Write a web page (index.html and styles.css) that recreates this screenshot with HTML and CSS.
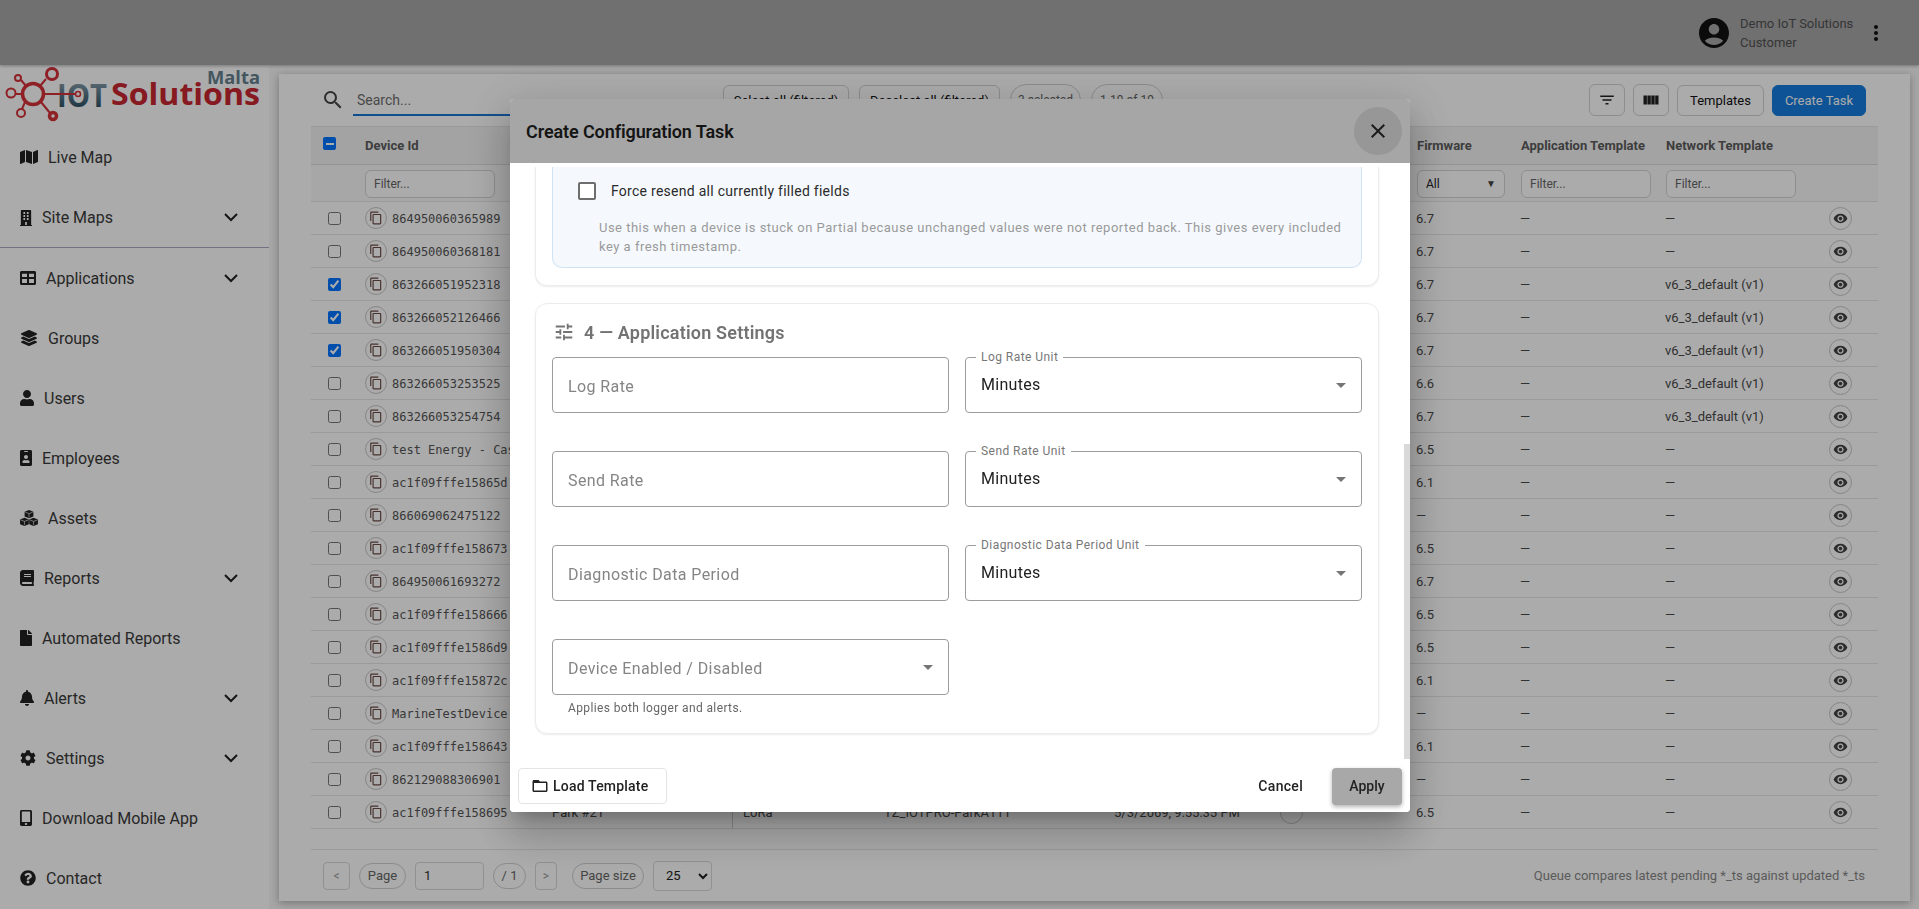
FILE: index.html
```html
<!DOCTYPE html>
<html>
<head>
<title>Create Configuration Task</title>
<link rel="stylesheet" href="styles.css">
</head>
<body>
<svg class="sprites">
  <symbol id="i-map" viewBox="0 0 576 512"><path d="M0 117.66v346.32c0 11.32 11.43 19.06 21.94 14.86L160 416V32L20.12 87.95A32.006 32.006 0 0 0 0 117.66zM192 416l192 64V96L192 32v384zM554.06 33.16L416 96v384l139.88-55.95A31.996 31.996 0 0 0 576 394.34V48.02c0-11.32-11.43-19.06-21.94-14.86z"/></symbol>
  <symbol id="i-building" viewBox="0 0 448 512" preserveAspectRatio="none"><path d="M436 480h-20V24c0-13.255-10.745-24-24-24H56C42.745 0 32 10.745 32 24v456H12c-6.627 0-12 5.373-12 12v20h448v-20c0-6.627-5.373-12-12-12zM128 76c0-6.627 5.373-12 12-12h40c6.627 0 12 5.373 12 12v40c0 6.627-5.373 12-12 12h-40c-6.627 0-12-5.373-12-12V76zm0 96c0-6.627 5.373-12 12-12h40c6.627 0 12 5.373 12 12v40c0 6.627-5.373 12-12 12h-40c-6.627 0-12-5.373-12-12v-40zm52 148h-40c-6.627 0-12-5.373-12-12v-40c0-6.627 5.373-12 12-12h40c6.627 0 12 5.373 12 12v40c0 6.627-5.373 12-12 12zm76 160h-64v-84c0-6.627 5.373-12 12-12h40c6.627 0 12 5.373 12 12v84zm64-172c0 6.627-5.373 12-12 12h-40c-6.627 0-12-5.373-12-12v-40c0-6.627 5.373-12 12-12h40c6.627 0 12 5.373 12 12v40zm0-96c0 6.627-5.373 12-12 12h-40c-6.627 0-12-5.373-12-12v-40c0-6.627 5.373-12 12-12h40c6.627 0 12 5.373 12 12v40zm0-96c0 6.627-5.373 12-12 12h-40c-6.627 0-12-5.373-12-12V76c0-6.627 5.373-12 12-12h40c6.627 0 12 5.373 12 12v40z"/></symbol>
  <symbol id="i-table" viewBox="0 0 512 512"><path fill-rule="evenodd" d="M48 32h416c26.5 0 48 21.5 48 48v352c0 26.500-21.500 48-48 48H48c-26.500 0-48-21.500-48-48V80c0-26.500 21.500-48 48-48zM64 120v100h160V120zM288 120v100h160V120zM64 284v132h160V284zM288 284v132h160V284z"/></symbol>
  <symbol id="i-layers" viewBox="0 0 512 512"><path d="M12.41 148.02l232.94 105.67c6.8 3.09 14.49 3.09 21.29 0l232.94-105.67c16.55-7.51 16.55-32.52 0-40.03L266.65 2.31a25.607 25.607 0 0 0-21.29 0L12.41 107.98c-16.55 7.51-16.55 32.53 0 40.04zm487.18 88.28l-58.09-26.33-161.64 73.27c-7.56 3.43-15.59 5.17-23.86 5.17s-16.29-1.74-23.86-5.17L70.51 209.97l-58.1 26.33c-16.55 7.5-16.55 32.5 0 40l232.94 105.59c6.8 3.08 14.49 3.08 21.29 0L499.59 276.3c16.55-7.5 16.55-32.5 0-40zm0 127.8l-57.87-26.23-161.86 73.37c-7.56 3.43-15.59 5.17-23.86 5.17s-16.29-1.74-23.86-5.17L70.29 337.87 12.41 364.1c-16.55 7.5-16.55 32.5 0 40l232.94 105.59c6.8 3.08 14.49 3.08 21.29 0L499.59 404.1c16.55-7.5 16.55-32.5 0-40z"/></symbol>
  <symbol id="i-user" viewBox="0 0 448 512"><path d="M224 256c70.7 0 128-57.3 128-128S294.7 0 224 0 96 57.3 96 128s57.3 128 128 128zm89.6 32h-16.7c-22.2 10.2-46.9 16-72.9 16s-50.6-5.8-72.9-16h-16.7C60.2 288 0 348.2 0 422.4V464c0 26.5 21.5 48 48 48h352c26.5 0 48-21.5 48-48v-41.6c0-74.2-60.2-134.4-134.4-134.4z"/></symbol>
  <symbol id="i-badge" viewBox="0 0 384 512"><path d="M336 0H48C21.5 0 0 21.5 0 48v416c0 26.5 21.5 48 48 48h288c26.500 0 48-21.500 48-48V48c0-26.500-21.500-48-48-48zM144 32h96c8.800 0 16 7.200 16 16s-7.200 16-16 16h-96c-8.800 0-16-7.200-16-16s7.200-16 16-16zm48 128c35.300 0 64 28.700 64 64s-28.700 64-64 64-64-28.700-64-64 28.700-64 64-64zm112 236.800c0 10.600-10 19.200-22.400 19.200H102.400C90 416 80 407.400 80 396.800v-19.200c0-31.800 30.100-57.600 67.200-57.600h5c12.300 5.100 25.700 8 39.800 8s27.600-2.900 39.800-8h5c37.100 0 67.200 25.800 67.200 57.600v19.200z"/></symbol>
  <symbol id="i-cubes" viewBox="0 0 576 512"><path d="M288 0l140 56v150l-140 56-140-56V56z"/><path d="M142 248l140 56v150l-140 56L2 454V304z"/><path d="M434 248l140 56v150l-140 56-140-56V304z"/><g fill="none" stroke="#fff" stroke-width="20"><path d="M170 70l118 46 118-46M288 116v120"/><path d="M24 318l118 46 118-46M142 364v120"/><path d="M316 318l118 46 118-46M434 364v120"/></g></symbol>
  <symbol id="i-book" viewBox="0 0 448 512"><path d="M448 360V24c0-13.300-10.700-24-24-24H96C43 0 0 43 0 96v320c0 53 43 96 96 96h328c13.300 0 24-10.700 24-24v-16c0-7.500-3.500-14.300-8.900-18.700-4.200-15.400-4.200-59.300 0-74.700 5.400-4.300 8.900-11.100 8.900-18.600zM128 134c0-3.300 2.700-6 6-6h212c3.300 0 6 2.700 6 6v20c0 3.300-2.700 6-6 6H134c-3.300 0-6-2.700-6-6v-20zm0 64c0-3.300 2.700-6 6-6h212c3.300 0 6 2.700 6 6v20c0 3.300-2.700 6-6 6H134c-3.300 0-6-2.700-6-6v-20zm253.400 250H96c-17.700 0-32-14.300-32-32 0-17.600 14.400-32 32-32h285.400c-1.900 17.100-1.900 46.900 0 64z"/></symbol>
  <symbol id="i-file" viewBox="0 0 384 512"><path d="M224 136V0H24C10.700 0 0 10.700 0 24v464c0 13.300 10.700 24 24 24h336c13.300 0 24-10.700 24-24V160H248c-13.200 0-24-10.800-24-24zm160-14.100v6.100H256V0h6.100c6.400 0 12.500 2.500 17 7l97.900 98c4.500 4.500 7 10.600 7 16.900z"/></symbol>
  <symbol id="i-bell" viewBox="0 0 448 512"><path d="M224 512c35.320 0 63.970-28.650 63.970-64H160.030c0 35.350 28.650 64 63.970 64zm215.390-149.710c-19.320-20.760-55.470-51.990-55.470-154.290 0-77.700-54.480-139.900-127.940-155.160V32c0-17.670-14.320-32-31.980-32s-31.980 14.330-31.980 32v20.840C118.560 68.100 64.080 130.300 64.080 208c0 102.300-36.150 133.530-55.470 154.290-6 6.450-8.660 14.160-8.610 21.710.11 16.400 12.980 32 32.100 32h383.800c19.120 0 32-15.600 32.100-32 .05-7.550-2.610-15.270-8.610-21.710z"/></symbol>
  <symbol id="i-cog" viewBox="0 0 512 512"><path d="M487.400 315.700l-42.600-24.600c4.300-23.200 4.300-47 0-70.200l42.600-24.600c4.900-2.800 7.100-8.600 5.500-14-11.100-35.600-30-67.800-54.700-94.600-3.800-4.100-10-5.100-14.800-2.300L380.800 110c-17.900-15.400-38.500-27.300-60.800-35.100V25.800c0-5.600-3.900-10.500-9.400-11.700-36.700-8.200-74.300-7.800-109.200 0-5.500 1.200-9.400 6.100-9.400 11.700V75c-22.200 7.900-42.800 19.800-60.800 35.100L88.700 85.500c-4.900-2.800-11-1.900-14.800 2.300-24.700 26.700-43.600 58.900-54.700 94.600-1.700 5.400.6 11.200 5.500 14L67.300 221c-4.300 23.200-4.300 47 0 70.200l-42.600 24.600c-4.900 2.800-7.100 8.600-5.500 14 11.100 35.600 30 67.800 54.700 94.600 3.800 4.100 10 5.100 14.800 2.300l42.600-24.600c17.900 15.400 38.500 27.300 60.800 35.100v49.200c0 5.600 3.900 10.500 9.400 11.700 36.700 8.200 74.300 7.800 109.200 0 5.500-1.200 9.400-6.100 9.400-11.700v-49.200c22.200-7.900 42.800-19.800 60.800-35.100l42.600 24.600c4.900 2.800 11 1.900 14.800-2.300 24.700-26.700 43.600-58.900 54.700-94.600 1.500-5.500-.7-11.300-5.600-14.100zM256 336c-44.100 0-80-35.900-80-80s35.900-80 80-80 80 35.900 80 80-35.900 80-80 80z"/></symbol>
  <symbol id="i-mobile" viewBox="0 0 320 512" preserveAspectRatio="none"><path d="M272 0H48C21.500 0 0 21.500 0 48v416c0 26.500 21.500 48 48 48h224c26.500 0 48-21.500 48-48V48c0-26.500-21.500-48-48-48zM160 480c-17.700 0-32-14.300-32-32s14.300-32 32-32 32 14.300 32 32-14.300 32-32 32zm112-108c0 6.600-5.400 12-12 12H60c-6.600 0-12-5.400-12-12V60c0-6.600 5.400-12 12-12h200c6.600 0 12 5.400 12 12v312z"/></symbol>
  <symbol id="i-help" viewBox="0 0 512 512"><path d="M504 256c0 136.997-111.043 248-248 248S8 392.997 8 256C8 119.083 119.043 8 256 8s248 111.083 248 248zM262.655 90c-54.497 0-89.255 22.957-116.549 63.758-3.536 5.286-2.353 12.415 2.715 16.258l34.699 26.310c5.205 3.947 12.621 3.008 16.665-2.122 17.864-22.658 30.113-35.797 57.303-35.797 20.429 0 45.698 13.148 45.698 32.958 0 14.976-12.363 22.667-32.534 33.976C247.128 238.528 216 254.941 216 296v4c0 6.627 5.373 12 12 12h56c6.627 0 12-5.373 12-12v-1.333c0-28.462 83.186-29.647 83.186-106.667 0-58.002-60.165-102-116.531-102zM256 338c-25.365 0-46 20.635-46 46 0 25.364 20.635 46 46 46s46-20.636 46-46c0-25.365-20.635-46-46-46z"/></symbol>
  <symbol id="i-chevron" viewBox="0 0 14 9"><path d="M1 1l6 6 6-6" fill="none" stroke="currentColor" stroke-width="2"/></symbol>
  <symbol id="i-copy" viewBox="0 0 24 24"><path d="M16 1H4c-1.100 0-2 .9-2 2v14h2V3h12V1zm3 4H8c-1.100 0-2 .9-2 2v14c0 1.100.9 2 2 2h11c1.100 0 2-.9 2-2V7c0-1.100-.9-2-2-2zm0 16H8V7h11v14z"/></symbol>
  <symbol id="i-eye" viewBox="0 0 24 24"><path d="M12 4.500C7 4.500 2.730 7.610 1 12c1.730 4.390 6 7.500 11 7.500s9.270-3.110 11-7.500c-1.730-4.390-6-7.500-11-7.500zM12 17c-2.760 0-5-2.240-5-5s2.240-5 5-5 5 2.240 5 5-2.240 5-5 5zm0-8c-1.660 0-3 1.340-3 3s1.340 3 3 3 3-1.340 3-3-1.340-3-3-3z"/></symbol>
</svg>

<div class="topbar">
  <svg class="avatar" viewBox="0 0 24 24"><path d="M12 2C6.480 2 2 6.480 2 12s4.480 10 10 10 10-4.480 10-10S17.520 2 12 2zm0 4c1.930 0 3.500 1.570 3.500 3.500S13.930 13 12 13s-3.500-1.570-3.500-3.500S10.070 6 12 6zm0 14c-2.030 0-4.430-.82-6.140-2.880C7.550 15.800 9.680 15 12 15s4.450.8 6.140 2.120C16.430 19.180 14.030 20 12 20z"/></svg>
  <div class="account">
    <div>Demo IoT Solutions</div>
    <div>Customer</div>
  </div>
  <svg class="more" viewBox="0 0 24 24"><path d="M12 8c1.100 0 2-.9 2-2s-.9-2-2-2-2 .9-2 2 .9 2 2 2zm0 2c-1.100 0-2 .9-2 2s.9 2 2 2 2-.9 2-2-.9-2-2-2zm0 6c-1.100 0-2 .9-2 2s.9 2 2 2 2-.9 2-2-.9-2-2-2z"/></svg>
</div>

<div class="shell">
  <!-- Sidebar -->
  <div class="sidebar">
    <svg class="logo" viewBox="0 0 269 62" width="269" height="62">
      <defs>
        <linearGradient id="iot-grad" x1="0" y1="0" x2="0" y2="1">
          <stop offset="0.2" stop-color="#8aa0ab"/>
          <stop offset="0.55" stop-color="#4f7284"/>
          <stop offset="0.85" stop-color="#254a5c"/>
        </linearGradient>
      </defs>
      <text class="logo-iot" x="57" y="42" fill="url(#iot-grad)" textLength="50" lengthAdjust="spacingAndGlyphs">IOT</text>
      <text class="logo-sol" x="111" y="40" textLength="149" lengthAdjust="spacingAndGlyphs">Solutions</text>
      <text class="logo-malta" x="207" y="19" textLength="53" lengthAdjust="spacingAndGlyphs">Malta</text>
      <g fill="none" stroke="#d43039" stroke-width="2">
        <circle cx="33" cy="29" r="10.500" stroke-width="3.500"/>
        <circle cx="52" cy="9" r="5.500" stroke-width="3"/>
        <circle cx="18" cy="13" r="3"/>
        <circle cx="11" cy="28" r="4.500"/>
        <circle cx="21" cy="48" r="4"/>
        <circle cx="53" cy="51" r="3.500" stroke-width="3.500"/>
        <circle cx="78" cy="29" r="2.500" stroke-width="1.500"/>
        <path d="M46 14l-6 7M21 15l5 6M16 29h7M25 37l-3 7M41 37l9 11M44 29h31" stroke-width="2"/>
      </g>
    </svg>
    <div class="nav-item"><svg class="nav-icon w18"><use href="#i-map"/></svg>Live Map</div>
    <div class="nav-item nav-divider"><svg class="nav-icon w12"><use href="#i-building"/></svg>Site Maps<svg class="chevron"><use href="#i-chevron"/></svg></div>
    <div class="nav-item"><svg class="nav-icon w16"><use href="#i-table"/></svg>Applications<svg class="chevron"><use href="#i-chevron"/></svg></div>
    <div class="nav-item"><svg class="nav-icon w18"><use href="#i-layers"/></svg>Groups</div>
    <div class="nav-item"><svg class="nav-icon w14"><use href="#i-user"/></svg>Users</div>
    <div class="nav-item"><svg class="nav-icon w12"><use href="#i-badge"/></svg>Employees</div>
    <div class="nav-item"><svg class="nav-icon w18"><use href="#i-cubes"/></svg>Assets</div>
    <div class="nav-item"><svg class="nav-icon w14"><use href="#i-book"/></svg>Reports<svg class="chevron"><use href="#i-chevron"/></svg></div>
    <div class="nav-item"><svg class="nav-icon w12"><use href="#i-file"/></svg>Automated Reports</div>
    <div class="nav-item"><svg class="nav-icon w14"><use href="#i-bell"/></svg>Alerts<svg class="chevron"><use href="#i-chevron"/></svg></div>
    <div class="nav-item"><svg class="nav-icon w16"><use href="#i-cog"/></svg>Settings<svg class="chevron"><use href="#i-chevron"/></svg></div>
    <div class="nav-item"><svg class="nav-icon w12"><use href="#i-mobile"/></svg>Download Mobile App</div>
    <div class="nav-item"><svg class="nav-icon w16"><use href="#i-help"/></svg>Contact</div>
  </div>

  <!-- Main panel -->
  <div class="main">
    <div class="panel">
      <div class="toolbar">
        <svg class="search-icon" viewBox="0 0 24 24"><path d="M15.500 14h-.79l-.28-.27A6.471 6.471 0 0 0 16 9.500 6.500 6.500 0 1 0 9.500 16c1.610 0 3.090-.59 4.230-1.570l.27.28v.79l5 4.990L20.490 19l-4.990-5zm-6 0C7.010 14 5 11.990 5 9.500S7.010 5 9.500 5 14 7.010 14 9.500 11.990 14 9.500 14z"/></svg>
        <div class="search">Search...</div>
        <div class="bulk">
          <span class="btn select-all">Select all (filtered)</span>
          <span class="btn deselect-all">Deselect all (filtered)</span>
          <span class="chip selected-chip">3 selected</span>
          <span class="chip range-chip">1-19 of 19</span>
        </div>
        <div class="tools">
          <span class="tool-btn"><svg class="tool-icon" viewBox="0 0 24 24"><path d="M10 18h4v-2h-4v2zM3 6v2h18V6H3zm3 7h12v-2H6v2z"/></svg></span>
          <span class="tool-btn"><svg class="tool-icon" viewBox="0 0 24 24"><path d="M2 6h4.500v12H2zM7.200 6h4.500v12H7.200zM12.400 6h4.500v12h-4.500zM17.600 6H22v12h-4.400z"/></svg></span>
          <span class="btn templates">Templates</span>
          <span class="btn create">Create Task</span>
        </div>
      </div>

      <div class="table-wrap">
        <table class="grid">
          <colgroup>
            <col class="c-check"><col class="c-id"><col class="c-name"><col class="c-type"><col class="c-tz"><col class="c-date"><col class="c-status"><col class="c-fw"><col class="c-app"><col class="c-net"><col class="c-act">
          </colgroup>
          <thead>
            <tr class="head-row">
              <th><span class="master-check"></span></th>
              <th>Device Id</th><th></th><th></th><th></th><th></th><th></th>
              <th>Firmware</th><th>Application Template</th><th>Network Template</th><th></th>
            </tr>
            <tr class="filter-row">
              <th></th>
              <th><span class="filter">Filter...</span></th><th></th><th></th><th></th><th></th><th></th>
              <th><span class="filter filter-select">All<i class="filter-arrow">&#9660;</i></span></th>
              <th><span class="filter">Filter...</span></th>
              <th><span class="filter">Filter...</span></th>
              <th></th>
            </tr>
          </thead>
          <tbody>
            <tr><td><input type="checkbox"></td><td><div class="id-cell"><span class="round-btn"><svg><use href="#i-copy"/></svg></span><span class="mono">864950060365989</span></div></td><td></td><td></td><td></td><td></td><td></td><td>6.7</td><td>—</td><td>—</td><td><span class="eye-btn"><svg><use href="#i-eye"/></svg></span></td></tr>
            <tr><td><input type="checkbox"></td><td><div class="id-cell"><span class="round-btn"><svg><use href="#i-copy"/></svg></span><span class="mono">864950060368181</span></div></td><td></td><td></td><td></td><td></td><td></td><td>6.7</td><td>—</td><td>—</td><td><span class="eye-btn"><svg><use href="#i-eye"/></svg></span></td></tr>
            <tr><td><input type="checkbox" checked></td><td><div class="id-cell"><span class="round-btn"><svg><use href="#i-copy"/></svg></span><span class="mono">863266051952318</span></div></td><td></td><td></td><td></td><td></td><td></td><td>6.7</td><td>—</td><td>v6_3_default (v1)</td><td><span class="eye-btn"><svg><use href="#i-eye"/></svg></span></td></tr>
            <tr><td><input type="checkbox" checked></td><td><div class="id-cell"><span class="round-btn"><svg><use href="#i-copy"/></svg></span><span class="mono">863266052126466</span></div></td><td></td><td></td><td></td><td></td><td></td><td>6.7</td><td>—</td><td>v6_3_default (v1)</td><td><span class="eye-btn"><svg><use href="#i-eye"/></svg></span></td></tr>
            <tr><td><input type="checkbox" checked></td><td><div class="id-cell"><span class="round-btn"><svg><use href="#i-copy"/></svg></span><span class="mono">863266051950304</span></div></td><td></td><td></td><td></td><td></td><td></td><td>6.7</td><td>—</td><td>v6_3_default (v1)</td><td><span class="eye-btn"><svg><use href="#i-eye"/></svg></span></td></tr>
            <tr><td><input type="checkbox"></td><td><div class="id-cell"><span class="round-btn"><svg><use href="#i-copy"/></svg></span><span class="mono">863266053253525</span></div></td><td></td><td></td><td></td><td></td><td></td><td>6.6</td><td>—</td><td>v6_3_default (v1)</td><td><span class="eye-btn"><svg><use href="#i-eye"/></svg></span></td></tr>
            <tr><td><input type="checkbox"></td><td><div class="id-cell"><span class="round-btn"><svg><use href="#i-copy"/></svg></span><span class="mono">863266053254754</span></div></td><td></td><td></td><td></td><td></td><td></td><td>6.7</td><td>—</td><td>v6_3_default (v1)</td><td><span class="eye-btn"><svg><use href="#i-eye"/></svg></span></td></tr>
            <tr><td><input type="checkbox"></td><td><div class="id-cell"><span class="round-btn"><svg><use href="#i-copy"/></svg></span><span class="mono">test Energy - Cas</span></div></td><td></td><td></td><td></td><td></td><td></td><td>6.5</td><td>—</td><td>—</td><td><span class="eye-btn"><svg><use href="#i-eye"/></svg></span></td></tr>
            <tr><td><input type="checkbox"></td><td><div class="id-cell"><span class="round-btn"><svg><use href="#i-copy"/></svg></span><span class="mono">ac1f09fffe15865d</span></div></td><td></td><td></td><td></td><td></td><td></td><td>6.1</td><td>—</td><td>—</td><td><span class="eye-btn"><svg><use href="#i-eye"/></svg></span></td></tr>
            <tr><td><input type="checkbox"></td><td><div class="id-cell"><span class="round-btn"><svg><use href="#i-copy"/></svg></span><span class="mono">866069062475122</span></div></td><td></td><td></td><td></td><td></td><td></td><td>—</td><td>—</td><td>—</td><td><span class="eye-btn"><svg><use href="#i-eye"/></svg></span></td></tr>
            <tr><td><input type="checkbox"></td><td><div class="id-cell"><span class="round-btn"><svg><use href="#i-copy"/></svg></span><span class="mono">ac1f09fffe158673</span></div></td><td></td><td></td><td></td><td></td><td></td><td>6.5</td><td>—</td><td>—</td><td><span class="eye-btn"><svg><use href="#i-eye"/></svg></span></td></tr>
            <tr><td><input type="checkbox"></td><td><div class="id-cell"><span class="round-btn"><svg><use href="#i-copy"/></svg></span><span class="mono">864950061693272</span></div></td><td></td><td></td><td></td><td></td><td></td><td>6.7</td><td>—</td><td>—</td><td><span class="eye-btn"><svg><use href="#i-eye"/></svg></span></td></tr>
            <tr><td><input type="checkbox"></td><td><div class="id-cell"><span class="round-btn"><svg><use href="#i-copy"/></svg></span><span class="mono">ac1f09fffe158666</span></div></td><td></td><td></td><td></td><td></td><td></td><td>6.5</td><td>—</td><td>—</td><td><span class="eye-btn"><svg><use href="#i-eye"/></svg></span></td></tr>
            <tr><td><input type="checkbox"></td><td><div class="id-cell"><span class="round-btn"><svg><use href="#i-copy"/></svg></span><span class="mono">ac1f09fffe1586d9</span></div></td><td></td><td></td><td></td><td></td><td></td><td>6.5</td><td>—</td><td>—</td><td><span class="eye-btn"><svg><use href="#i-eye"/></svg></span></td></tr>
            <tr><td><input type="checkbox"></td><td><div class="id-cell"><span class="round-btn"><svg><use href="#i-copy"/></svg></span><span class="mono">ac1f09fffe15872c</span></div></td><td></td><td></td><td></td><td></td><td></td><td>6.1</td><td>—</td><td>—</td><td><span class="eye-btn"><svg><use href="#i-eye"/></svg></span></td></tr>
            <tr><td><input type="checkbox"></td><td><div class="id-cell"><span class="round-btn"><svg><use href="#i-copy"/></svg></span><span class="mono">MarineTestDevice</span></div></td><td></td><td></td><td></td><td></td><td></td><td>—</td><td>—</td><td>—</td><td><span class="eye-btn"><svg><use href="#i-eye"/></svg></span></td></tr>
            <tr><td><input type="checkbox"></td><td><div class="id-cell"><span class="round-btn"><svg><use href="#i-copy"/></svg></span><span class="mono">ac1f09fffe158643</span></div></td><td></td><td></td><td></td><td></td><td></td><td>6.1</td><td>—</td><td>—</td><td><span class="eye-btn"><svg><use href="#i-eye"/></svg></span></td></tr>
            <tr><td><input type="checkbox"></td><td><div class="id-cell"><span class="round-btn"><svg><use href="#i-copy"/></svg></span><span class="mono">862129088306901</span></div></td><td></td><td></td><td></td><td></td><td></td><td>—</td><td>—</td><td>—</td><td><span class="eye-btn"><svg><use href="#i-eye"/></svg></span></td></tr>
            <tr><td><input type="checkbox"></td><td><div class="id-cell"><span class="round-btn"><svg><use href="#i-copy"/></svg></span><span class="mono">ac1f09fffe158695</span></div></td><td>Park #21</td><td class="cell-split">LoRa</td><td>TZ_IOTPRO-ParkA111</td><td>5/3/2069, 9:55:35 PM</td><td><span class="eye-btn status-dot"></span></td><td>6.5</td><td>—</td><td>—</td><td><span class="eye-btn"><svg><use href="#i-eye"/></svg></span></td></tr>
          </tbody>
        </table>
      </div>

      <div class="pager">
        <span class="pg-btn">&lt;</span>
        <span class="chip pg-chip page-chip">Page</span>
        <span class="pg-input">1</span>
        <span class="chip pg-chip of-chip">/ 1</span>
        <span class="pg-btn pg-next">&gt;</span>
        <span class="chip pg-chip size-chip">Page size</span>
        <select class="pg-select"><option>25</option></select>
        <span class="queue-note">Queue compares latest pending *_ts against updated *_ts</span>
      </div>
    </div>
  </div>
</div>

<!-- Dialog -->
<div class="backdrop"></div>
<div class="dialog-layer">
  <div class="dialog">
    <div class="dialog-head">
      <div class="dialog-title">Create Configuration Task</div>
      <span class="dialog-close"><svg viewBox="0 0 24 24"><path d="M19 6.410L17.590 5 12 10.590 6.410 5 5 6.410 10.590 12 5 17.590 6.410 19 12 13.410 17.590 19 19 17.590 13.410 12z"/></svg></span>
    </div>
    <div class="dialog-body">
      <div class="card card-cut">
        <div class="force-box">
          <label class="force-row"><input type="checkbox" class="force-check"><span>Force resend all currently filled fields</span></label>
          <div class="force-help">Use this when a device is stuck on Partial because unchanged values were not reported back. This gives every included key a fresh timestamp.</div>
        </div>
      </div>
      <div class="card card-settings">
        <div class="card-title">
          <svg viewBox="0 0 24 24"><path d="M3 17v2h6v-2H3zM3 5v2h10V5H3zm10 16v-2h8v-2h-8v-2h-2v6h2zM7 9v2H3v2h4v2h2V9H7zm14 4v-2H11v2h10zm-6-4h2V7h4V5h-4V3h-2v6z"/></svg>
          4 — Application Settings
        </div>
        <div class="fields">
          <div class="field"><span class="field-hint">Log Rate</span></div>
          <div class="field"><span class="field-label">Log Rate Unit</span><span class="field-value">Minutes</span><i class="field-arrow"></i></div>
          <div class="field"><span class="field-hint">Send Rate</span></div>
          <div class="field"><span class="field-label">Send Rate Unit</span><span class="field-value">Minutes</span><i class="field-arrow"></i></div>
          <div class="field"><span class="field-hint">Diagnostic Data Period</span></div>
          <div class="field"><span class="field-label">Diagnostic Data Period Unit</span><span class="field-value">Minutes</span><i class="field-arrow"></i></div>
          <div class="field-with-note">
            <div class="field"><span class="field-hint">Device Enabled / Disabled</span><i class="field-arrow"></i></div>
            <div class="field-note">Applies both logger and alerts.</div>
          </div>
        </div>
      </div>
      <div class="scroll-thumb"></div>
    </div>
    <div class="dialog-foot">
      <span class="load-btn">
        <svg viewBox="0 0 24 24"><path d="M20 6h-8l-2-2H4c-1.100 0-1.990.9-1.990 2L2 18c0 1.100.9 2 2 2h16c1.100 0 2-.9 2-2V8c0-1.100-.9-2-2-2zm0 12H4V8h16v10z"/></svg>
        Load Template
      </span>
      <span class="cancel-btn">Cancel</span>
      <span class="apply-btn">Apply</span>
    </div>
  </div>
</div>
</body>
</html>
```

FILE: styles.css
```css
* {
    box-sizing: border-box;
}
html, body {
    height: 100%;
}
body {
    font-family: Roboto, sans-serif;
    font-size: 14px;
    color: #333;
    background: #fff;
    margin: 0px;
    overflow: hidden;
}
.sprites {
    display: none;
}

/* Top bar */
.topbar {
    height: 65px;
    background: #a8a8a8;
    display: flex;
    align-items: center;
    justify-content: flex-end;
    padding-right: 31px;
    box-shadow: 0 1px 3px rgba(0,0,0,.3);
    position: relative;
}
.avatar {
    width: 36px;
    height: 36px;
    margin-right: 8px;
    fill: #111;
}
.account {
    width: 124px;
    font-size: 13px;
    line-height: 19px;
    color: #505050;
}
.more {
    width: 24px;
    height: 24px;
    fill: #111;
}

/* Layout */
.shell {
    display: flex;
    height: calc(100% - 65px);
}
.sidebar {
    width: 269px;
    flex: none;
    background: #fff;
}
.logo {
    display: block;
}
.logo-iot {
    font-family: "Open Sans", sans-serif;
    font-weight: 700;
    font-size: 33px;
}
.logo-sol {
    font-family: "Open Sans", sans-serif;
    font-weight: 700;
    font-size: 31px;
    fill: #c82730;
}
.logo-malta {
    font-family: "Open Sans", sans-serif;
    font-weight: 700;
    font-size: 17px;
    fill: #66818e;
}
.nav-item {
    height: 60px;
    display: flex;
    align-items: center;
    gap: 10px;
    padding: 0 31px 0 20px;
    font-size: 16px;
    color: #3a3a3a;
}
.nav-divider {
    height: 61px;
    padding-top: 1px;
    border-bottom: 1px solid #a9a9c0;
}
.nav-icon {
    height: 16px;
    flex: none;
    fill: #222;
}
.w12 { width: 12px; }
.w14 { width: 14px; }
.w16 { width: 16px; }
.w18 { width: 18px; }
.chevron {
    width: 14px;
    height: 9px;
    margin-left: auto;
    color: #222;
}

.main {
    flex: 1;
    background: #f8f8f8;
    padding: 9px 9px 8px 10px;
    min-width: 0;
}
.panel {
    background: #fff;
    height: 100%;
    box-shadow: 0 2px 8px rgba(0,0,0,.3);
    padding: 10px 32px 0 32px;
}

/* Toolbar */
.toolbar {
    display: flex;
    align-items: center;
    height: 32px;
    margin-bottom: 10px;
    padding-left: 10px;
    padding-right: 12px;
}
.search-icon {
    width: 24px;
    height: 24px;
    flex: none;
    fill: #444;
    margin-right: 8px;
}
.search {
    width: 352px;
    height: 32px;
    padding: 6px 4px;
    font-size: 14px;
    line-height: 20px;
    color: #6e6e6e;
    border-bottom: 2px solid #1976d2;
    margin-bottom: 0;
}
.bulk {
    display: flex;
    align-items: center;
    gap: 10px;
    margin-left: 18px;
}
.btn {
    display: inline-flex;
    align-items: center;
    justify-content: center;
    height: 31px;
    border: 1px solid #d2d2d2;
    border-radius: 6px;
    font-size: 13px;
    color: #111;
    background: #fff;
}
.select-all { width: 126px; }
.deselect-all { width: 141px; }
.chip {
    display: inline-flex;
    align-items: center;
    justify-content: center;
    border: 1px solid #d0d0d0;
    border-radius: 16px;
    height: 32px;
    font-size: 12px;
    color: #666;
}
.selected-chip { width: 71px; }
.range-chip { width: 72px; }
.tools {
    display: flex;
    align-items: center;
    gap: 8px;
    margin-left: auto;
}
.tool-btn {
    width: 36px;
    height: 32px;
    border: 1px solid #d2d2d2;
    border-radius: 6px;
    display: flex;
    align-items: center;
    justify-content: center;
}
.tool-icon {
    width: 18px;
    height: 18px;
    fill: #222;
}
.templates { width: 87px; }
.create {
    width: 94px;
    background: #157de0;
    border-color: #157de0;
    color: #fff;
}

/* Table */
.table-wrap {
    height: 724px;
    border-bottom: 1px solid #e6e6e6;
}
.grid {
    width: 1567px;
    table-layout: fixed;
    border-collapse: separate;
    border-spacing: 0;
}
.c-check { width: 43px; }
.c-id { width: 188px; }
.c-name { width: 190px; }
.c-type { width: 142px; }
.c-tz { width: 230px; }
.c-date { width: 166px; }
.c-status { width: 136px; }
.c-fw { width: 104px; }
.c-app { width: 145px; }
.c-net { width: 148px; }
.c-act { width: 75px; }
.head-row th {
    height: 39px;
    background: #f3f3f3;
    border-top: 1px solid #e6e6e6;
    border-bottom: 1px solid #dcdcdc;
    text-align: left;
    padding: 0 0 0 11px;
    font-size: 13px;
    font-weight: 700;
    color: #5c5c5c;
    white-space: nowrap;
}
.filter-row th {
    height: 37px;
    background: #fafafa;
    border-bottom: 1px solid #e6e6e6;
    text-align: left;
    padding: 1px 0 0 11px;
    font-weight: 400;
}
.head-row th:first-child {
    padding-left: 12px;
}
.master-check {
    display: block;
    position: relative;
    width: 13px;
    height: 13px;
    margin-top: -4px;
    border-radius: 2px;
    background: #0075ff;
}
.master-check::after {
    content: "";
    position: absolute;
    left: 2.500px;
    top: 5.500px;
    width: 8px;
    height: 2px;
    background: #fff;
}
.filter {
    display: block;
    width: 130px;
    height: 28px;
    border: 1px solid #d4d4d4;
    border-radius: 6px;
    font-size: 12px;
    line-height: 26px;
    padding-left: 8px;
    color: #666;
    background: #fff;
}
.filter-select {
    position: relative;
    color: #222;
    width: 88px;
}
.filter-arrow {
    position: absolute;
    right: 8px;
    top: 0;
    font-style: normal;
    font-size: 10px;
    color: #444;
}
.grid td {
    height: 33px;
    padding: 1px 10px 0;
    border-bottom: 1px solid #e6e6e6;
    font-size: 13px;
    color: #4a4a4a;
    white-space: nowrap;
    overflow: hidden;
}
.grid td:first-child {
    padding: 0 0 0 17px;
}
.grid input {
    display: block;
    margin: 0;
    width: 13px;
    height: 13px;
}
.cell-split {
    border-left: 1px solid #d0d0d0;
}
.id-cell {
    display: flex;
    align-items: center;
    gap: 5px;
    margin-left: 1px;
    margin-top: -1px;
}
.round-btn {
    width: 22px;
    height: 22px;
    flex: none;
    border: 1px solid #c8c8c8;
    border-radius: 50%;
    display: flex;
    align-items: center;
    justify-content: center;
}
.round-btn svg {
    width: 14px;
    height: 14px;
    fill: #6b4a44;
}
.mono {
    font-family: "DejaVu Sans Mono", monospace;
    font-size: 12px;
    color: #555;
    padding-top: 2px;
}
.eye-btn {
    width: 23px;
    height: 23px;
    margin-left: 16px;
    margin-top: -1px;
    border: 1px solid #c8c8c8;
    border-radius: 50%;
    display: flex;
    align-items: center;
    justify-content: center;
}
.status-dot {
    margin-left: 0;
}
.eye-btn svg {
    width: 15px;
    height: 15px;
    fill: #444;
}

/* Pager */
.pager {
    height: 51px;
    display: flex;
    align-items: center;
    padding: 0 13px 0 12px;
    color: #777;
}
.pg-btn {
    width: 27px;
    height: 28px;
    border: 1px solid #d8d8d8;
    border-radius: 4px;
    display: flex;
    align-items: center;
    justify-content: center;
    font-size: 12px;
    color: #999;
}
.pg-chip {
    height: 26px;
    font-size: 13px;
}
.page-chip { width: 47px; margin-left: 9px; }
.pg-input {
    width: 69px;
    height: 28px;
    margin-left: 9px;
    border: 1px solid #d8d8d8;
    border-radius: 4px;
    padding-left: 8px;
    font-size: 13px;
    line-height: 26px;
    color: #333;
}
.of-chip { width: 33px; margin-left: 9px; }
.pg-next { width: 22px; margin-left: 9px; }
.size-chip { width: 72px; margin-left: 15px; }
.pg-select {
    width: 59px;
    height: 30px;
    margin-left: 9px;
    border: 1px solid #d8d8d8;
    border-radius: 4px;
    background: #fff;
    font-family: Roboto, sans-serif;
    font-size: 13px;
    padding-left: 8px;
    color: #222;
}
.queue-note {
    margin-left: auto;
    font-size: 13px;
    color: #888;
}

/* Dialog */
.backdrop {
    position: fixed;
    top: 0;
    left: 0;
    right: 0;
    bottom: 0;
    background: rgba(0,0,0,.33);
}
.dialog-layer {
    position: fixed;
    top: 99px;
    left: 510px;
}
.dialog {
    width: 900px;
    height: 713px;
    display: flex;
    flex-direction: column;
    border-radius: 4px;
    background: #fff;
    overflow: hidden;
    box-shadow: 0 11px 15px -7px rgba(0,0,0,.2), 0 24px 38px 3px rgba(0,0,0,.14), 0 9px 46px 8px rgba(0,0,0,.12);
}
.dialog-head {
    height: 64px;
    flex: none;
    background: #a6a6a6;
    display: flex;
    align-items: center;
    justify-content: space-between;
    padding: 0 8px 0 16px;
}
.dialog-title {
    font-size: 18px;
    font-weight: 600;
    letter-spacing: -.1px;
    color: #151515;
}
.dialog-close {
    width: 48px;
    height: 48px;
    border-radius: 50%;
    background: #979797;
    display: flex;
    align-items: center;
    justify-content: center;
}
.dialog-close svg {
    width: 24px;
    height: 24px;
    fill: #1c1c1c;
}
.dialog-body {
    flex: 1;
    position: relative;
    overflow: hidden;
    padding: 4px 31px 0 25px;
}
.card {
    border: 1px solid #ececec;
    border-radius: 12px;
    box-shadow: 0 1px 2px rgba(0,0,0,.08);
    background: #fff;
}
.card-cut {
    height: 119px;
    border-top: 0;
    border-radius: 0 0 12px 12px;
    padding: 0 16px;
    margin-bottom: 17px;
}
.force-box {
    height: 101px;
    border: 1px solid #cfe3f5;
    border-top: 0;
    border-radius: 0 0 10px 10px;
    background: #f5f9fd;
    padding: 14px 15px 0 25px;
}
.force-row {
    display: flex;
    align-items: center;
    gap: 15px;
    font-size: 14px;
    line-height: 20px;
    letter-spacing: .27px;
    color: #2b2b2b;
}
.force-check {
    appearance: none;
    width: 18px;
    height: 18px;
    margin: 0;
    background: #fff;
    border: 2px solid #6e6e6e;
    border-radius: 2px;
}
.force-help {
    margin-top: 17px;
    margin-left: 21px;
    font-size: 13px;
    line-height: 19px;
    letter-spacing: .49px;
    color: #9a9a9a;
}
.card-settings {
    height: 431px;
    padding: 14px 16px 16px;
}
.card-title {
    display: flex;
    align-items: center;
    gap: 9px;
    height: 28px;
    margin-bottom: 11px;
    padding-left: 1px;
    font-size: 18px;
    font-weight: 600;
    letter-spacing: .2px;
    color: #737373;
}
.card-title svg {
    width: 22px;
    height: 22px;
    fill: #737373;
}
.fields {
    display: grid;
    grid-template-columns: 1fr 1fr;
    gap: 38px 16px;
}
.field {
    position: relative;
    height: 56px;
    display: flex;
    align-items: center;
    padding: 0 15px;
    border: 1px solid #9c9c9c;
    border-radius: 4px;
}
.field-hint {
    font-size: 16px;
    letter-spacing: .4px;
    color: #858585;
    padding-top: 3px;
}
.field-value {
    font-size: 16px;
    letter-spacing: .3px;
    color: #222;
    padding-bottom: 2px;
}
.field-label {
    position: absolute;
    left: 10px;
    top: -8px;
    padding: 0 5px;
    background: #fff;
    font-size: 12px;
    line-height: 14px;
    letter-spacing: .45px;
    color: #777;
}
.field-arrow {
    position: absolute;
    right: 15px;
    top: 25px;
    width: 0;
    height: 0;
    border-left: 5px solid transparent;
    border-right: 5px solid transparent;
    border-top: 5px solid #757575;
}
.field-note {
    margin: 6px 0 0 16px;
    font-size: 12px;
    line-height: 14px;
    letter-spacing: .38px;
    color: #666;
}
.scroll-thumb {
    position: absolute;
    right: 0;
    top: 281px;
    width: 6px;
    height: 315px;
    background: #d9d9d9;
}
.dialog-foot {
    height: 52px;
    flex: none;
    display: flex;
    align-items: flex-start;
    padding: 8px 8px 0 8px;
    background: #fff;
}
.load-btn {
    width: 149px;
    height: 36px;
    display: flex;
    align-items: center;
    gap: 4px;
    padding-left: 12px;
    border: 1px solid #e4e4e4;
    border-radius: 4px;
    font-size: 14px;
    font-weight: 500;
    letter-spacing: .2px;
    color: #222;
}
.load-btn svg {
    width: 18px;
    height: 18px;
    fill: #222;
}
.cancel-btn {
    margin-left: auto;
    margin-right: 29px;
    height: 37px;
    line-height: 37px;
    font-size: 14px;
    font-weight: 500;
    letter-spacing: .3px;
    color: #222;
}
.apply-btn {
    width: 70px;
    height: 37px;
    text-align: center;
    line-height: 37px;
    font-size: 14px;
    font-weight: 500;
    color: #222;
    background: #a8a8a8;
    border-radius: 4px;
    box-shadow: 0 2px 4px rgba(0,0,0,.3);
}
```
